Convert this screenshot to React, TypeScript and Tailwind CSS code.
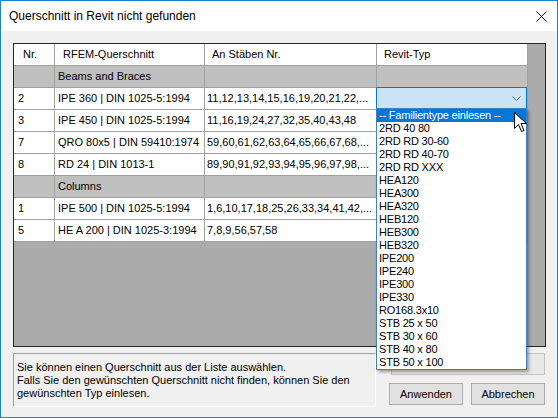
import React from "react";

type Row =
  | { group: string }
  | { nr: string; q: string; s: string; combo?: boolean };

const rows: Row[] = [
  { group: "Beams and Braces" },
  { nr: "2", q: "IPE 360 | DIN 1025-5:1994", s: "11,12,13,14,15,16,19,20,21,22,...", combo: true },
  { nr: "3", q: "IPE 450 | DIN 1025-5:1994", s: "11,16,19,24,27,32,35,40,43,48" },
  { nr: "7", q: "QRO 80x5 | DIN 59410:1974", s: "59,60,61,62,63,64,65,66,67,68,..." },
  { nr: "8", q: "RD 24 | DIN 1013-1", s: "89,90,91,92,93,94,95,96,97,98,..." },
  { group: "Columns" },
  { nr: "1", q: "IPE 500 | DIN 1025-5:1994", s: "1,6,10,17,18,25,26,33,34,41,42,..." },
  { nr: "5", q: "HE A 200 | DIN 1025-3:1994", s: "7,8,9,56,57,58" },
];

const items = [
  "-- Familientype einlesen --",
  "2RD 40 80",
  "2RD RD 30-60",
  "2RD RD 40-70",
  "2RD RD XXX",
  "HEA120",
  "HEA300",
  "HEA320",
  "HEB120",
  "HEB300",
  "HEB320",
  "IPE200",
  "IPE240",
  "IPE300",
  "IPE330",
  "RO168.3x10",
  "STB 25 x 50",
  "STB 30 x 60",
  "STB 40 x 80",
  "STB 50 x 100",
];

const cell = "h-[22px] border-b border-r border-[#a0a0a0] flex items-center whitespace-nowrap overflow-hidden";

export default function App() {
  return (
    <div
      className="relative w-[558px] h-[418px] overflow-hidden border border-[#1883d7] bg-[#f0f0f0] text-[11px] text-black"
      style={{ fontFamily: '"Liberation Sans", Arial, sans-serif' }}
    >
      {/* Title bar */}
      <div className="h-[30px] bg-white flex items-center justify-between pl-[8px] pr-[10px]">
        <span className="text-[12px]">Querschnitt in Revit nicht gefunden</span>
        <svg width="11" height="11" viewBox="0 0 11 11" className="mt-[1px]">
          <path d="M0.5 0.5 L10.5 10.5 M10.5 0.5 L0.5 10.5" stroke="#111" strokeWidth="1" fill="none" />
        </svg>
      </div>

      {/* Body */}
      <div className="pl-[12px] pt-[12px]">
        {/* Grid */}
        <div className="w-[533px] h-[304px] border border-[#262626] bg-[#ababab]">
          <div className="grid grid-cols-[41px_150px_172px_151px] w-[514px]">
            <div className={`${cell} bg-white pl-[9px]`}>Nr.</div>
            <div className={`${cell} bg-white pl-[8px]`}>RFEM-Querschnitt</div>
            <div className={`${cell} bg-white pl-[7px]`}>An Stäben Nr.</div>
            <div className={`${cell} bg-white pl-[7px]`}>Revit-Typ</div>
            {rows.map((r, i) =>
              "group" in r ? (
                <React.Fragment key={i}>
                  <div className={`${cell} bg-[#c0c0c0]`} />
                  <div className={`${cell} bg-[#c0c0c0] pl-[3px]`}>{r.group}</div>
                  <div className={`${cell} bg-[#c0c0c0]`} />
                  <div className={`${cell} bg-[#c0c0c0]`} />
                </React.Fragment>
              ) : (
                <React.Fragment key={i}>
                  <div className={`${cell} bg-white pl-[4px]`}>{r.nr}</div>
                  <div className={`${cell} bg-white pl-[3px]`}>{r.q}</div>
                  <div className={`${cell} bg-white pl-[2px]`}>{r.s}</div>
                  <div className={`${cell} bg-white relative overflow-visible`}>
                    {r.combo && (
                      <div className="absolute left-[-1px] top-[-1px] w-[151px] h-[22px] border border-[#0078d7] bg-[#cce4f7] flex items-center justify-end pr-[5px]">
                        <svg width="9" height="5" viewBox="0 0 9 5">
                          <path d="M0.5 0.5 L4.5 4.5 L8.5 0.5" stroke="#606060" strokeWidth="1" fill="none" />
                        </svg>
                      </div>
                    )}
                  </div>
                </React.Fragment>
              )
            )}
          </div>
        </div>

        {/* Bottom */}
        <div className="flex mt-[6px]">
          <div className="w-[363px] h-[54px] border-t border-l border-[#a0a0a0] border-b border-r border-b-white border-r-white pl-[3px] pt-[7px] leading-[13px]">
            <div>Sie können einen Querschnitt aus der Liste auswählen.</div>
            <div>Falls Sie den gewünschten Querschnitt nicht finden, können Sie den</div>
            <div>gewünschten Typ einlesen.</div>
          </div>
          <div className="ml-[13px] w-[156px] flex flex-col">
            <div className="ml-[2px] h-[22px] border border-[#c4c4c4] bg-[#e8e8e8]" />
            <div className="flex gap-[8px] mt-[8px]">
              <div className="w-[74px] h-[22px] border border-[#adadad] bg-[#e1e1e1] flex items-center justify-center">Anwenden</div>
              <div className="w-[74px] h-[22px] border border-[#adadad] bg-[#e1e1e1] flex items-center justify-center">Abbrechen</div>
            </div>
          </div>
        </div>
      </div>

      {/* Dropdown list */}
      <div className="absolute left-[375px] top-[107px] w-[151px] h-[262px] border border-[#3c7fc4] bg-white shadow-[2px_2px_3px_rgba(0,0,0,0.35)]">
        {items.map((t, i) => (
          <div
            key={i}
            className={`h-[13px] leading-[13px] pl-[2px] whitespace-nowrap text-[11px] tracking-[-0.2px] ${i === 0 ? "bg-[#0078d7] text-white" : "text-black"}`}
          >
            {t}
          </div>
        ))}
      </div>

      {/* Mouse cursor */}
      <svg className="absolute left-[513px] top-[111px]" width="13" height="21" viewBox="0 0 13 21">
        <path d="M0.5 0.5 L0.5 16.5 L4.5 12.5 L7.5 19.5 L10 18.5 L7 11.5 L12.5 11.5 Z" fill="white" stroke="black" strokeWidth="1" strokeLinejoin="round" />
      </svg>
    </div>
  );
}
